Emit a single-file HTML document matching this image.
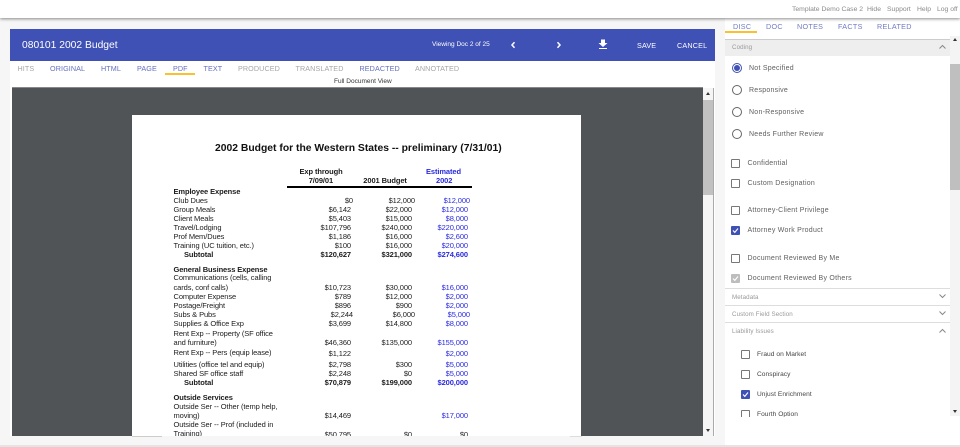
<!DOCTYPE html>
<html><head><meta charset="utf-8"><style>
html,body{margin:0;padding:0;width:960px;height:447px;overflow:hidden;background:#f6f6f6;font-family:"Liberation Sans",Arial,sans-serif}
body{filter:blur(.3px)}
.a{position:absolute}
.t{position:absolute;white-space:nowrap;line-height:10px;height:10px}
#top .t{font-size:6.8px;color:#8a8a8a;top:5px}
.tab{font-size:7.2px;letter-spacing:.1px;top:64px;color:#6470bd}
.off{color:#a6a6a6}
.rt{font-size:7.2px;letter-spacing:.3px;top:22px;color:#6f7bc4}
.lab{font-size:7px;letter-spacing:.25px;color:#5f5f5f}
.sec{font-size:6.2px;letter-spacing:.1px;color:#999}
.sub{font-size:6.6px;letter-spacing:.05px;color:#444}
.r{width:8px;height:8px;border:1px solid #666;border-radius:50%;position:absolute;left:732px;background:#fff}
.c{width:6.5px;height:6.5px;border:1.2px solid #777;border-radius:1px;position:absolute;background:#fff}
.on{background:#3f51b5;border-color:#3f51b5}
.on svg,.dis svg{position:absolute;left:0;top:0}
.dis{background:#bdbdbd;border-color:#bdbdbd}
.ln{position:absolute;left:725px;width:225px;height:1px;background:#ddd}
#doc .t{font-size:7.5px;letter-spacing:-.1px;color:#1c1c1c}
.b{font-weight:bold}
#doc .bl{color:#2a2ae0}
.c1{right:609px}.c2{right:548px}.c3{right:492px}
.c1x{right:607px}.c2x{right:545px}.c3x{right:490px}
</style></head><body>
<!-- top bar -->
<div id="top" class="a" style="left:0;top:0;width:960px;height:18px;background:#fff;box-shadow:0 1px 3px rgba(0,0,0,.45);z-index:3">
<span class="t" style="left:792px">Template Demo Case 2</span>
<span class="t" style="left:867px">Hide</span>
<span class="t" style="left:887px">Support</span>
<span class="t" style="left:917px">Help</span>
<span class="t" style="left:937px">Log off</span>
</div>
<!-- left card -->
<div class="a" style="left:10px;top:61px;width:705px;height:375px;background:#fff"></div>
<div class="a" style="left:10px;top:29px;width:705px;height:32px;background:#3f51b5"></div>
<span class="t" style="left:22px;top:41px;font-size:10.3px;color:#fff">080101 2002 Budget</span>
<span class="t" style="left:432px;top:40px;font-size:6.5px;color:#fff">Viewing Doc 2 of 25</span>
<svg class="a" style="left:509px;top:40px" width="8" height="10"><path d="M5.5 2.2 L3 5 L5.5 7.8" fill="none" stroke="#fff" stroke-width="1.5"/></svg>
<svg class="a" style="left:555px;top:40px" width="8" height="10"><path d="M2.5 2.2 L5 5 L2.5 7.8" fill="none" stroke="#fff" stroke-width="1.5"/></svg>
<svg class="a" style="left:598px;top:39px" width="10" height="11"><path d="M3 0.5H7V4H9.5L5 8L0.5 4H3Z M1 9H9V10H1Z" fill="#fff"/></svg>
<span class="t" style="left:637px;top:40.5px;font-size:7.2px;color:#fff;letter-spacing:.15px">SAVE</span>
<span class="t" style="left:677px;top:40.5px;font-size:7.2px;color:#fff;letter-spacing:.2px">CANCEL</span>
<!-- tabs -->
<span class="t tab off" style="left:17.5px">HITS</span>
<span class="t tab" style="left:50px">ORIGINAL</span>
<span class="t tab" style="left:101px">HTML</span>
<span class="t tab" style="left:137px">PAGE</span>
<span class="t tab" style="left:173px">PDF</span>
<span class="t tab" style="left:203.5px">TEXT</span>
<span class="t tab off" style="left:238px">PRODUCED</span>
<span class="t tab off" style="left:295.5px">TRANSLATED</span>
<span class="t tab" style="left:359.5px">REDACTED</span>
<span class="t tab off" style="left:415px">ANNOTATED</span>
<div class="a" style="left:165px;top:73px;width:30px;height:2px;background:#fbc02d"></div>
<span class="t" style="left:334px;top:77px;font-size:6.5px;color:#333">Full Document View</span>
<!-- viewer -->
<div class="a" style="left:12px;top:88px;width:691px;height:348px;background:#505457;border-top:0"></div>
<div class="a" style="left:12px;top:87px;width:691px;height:1px;background:#888"></div>
<div class="a" style="left:703px;top:88px;width:10px;height:348px;background:#f5f5f5;border-right:1px solid #aaa"></div>
<div class="a" style="left:703px;top:100px;width:10px;height:95px;background:#c1c1c1"></div>
<div class="a" style="left:705.5px;top:92px;border:2.5px solid transparent;border-top:0;border-bottom:3px solid #333"></div>
<div class="a" style="left:705.5px;top:429px;border:2.5px solid transparent;border-bottom:0;border-top:3px solid #333"></div>
<!-- doc page -->
<div id="doc" class="a" style="left:0;top:0;width:960px;height:436px;overflow:hidden">
<div class="a" style="left:132px;top:115px;width:449px;height:330px;background:#fff"></div>
<span class="t b" style="left:215px;top:143.5px;font-size:10.35px;letter-spacing:0;color:#111">2002 Budget for the Western States -- preliminary (7/31/01)</span>
<span class="t b" style="left:299.5px;top:166.5px">Exp through</span>
<span class="t b" style="left:308.7px;top:176px">7/09/01</span>
<span class="t b" style="left:363.3px;top:176px">2001 Budget</span>
<span class="t b bl" style="left:426px;top:166.5px">Estimated</span>
<span class="t b bl" style="left:436px;top:176px">2002</span>
<div class="a" style="left:287px;top:186px;width:185px;height:2px;background:#000"></div>

<span class="t b" style="left:173.5px;top:186.5px">Employee Expense</span>
<span class="t" style="left:173.5px;top:195.5px">Club Dues</span><span class="t c1x" style="top:195.5px">$0</span><span class="t c2x" style="top:195.5px">$12,000</span><span class="t c3x bl" style="top:195.5px">$12,000</span>
<span class="t" style="left:173.5px;top:205px">Group Meals</span><span class="t c1" style="top:205px">$6,142</span><span class="t c2" style="top:205px">$22,000</span><span class="t c3 bl" style="top:205px">$12,000</span>
<span class="t" style="left:173.5px;top:214px">Client Meals</span><span class="t c1" style="top:214px">$5,403</span><span class="t c2" style="top:214px">$15,000</span><span class="t c3 bl" style="top:214px">$8,000</span>
<span class="t" style="left:173.5px;top:223px">Travel/Lodging</span><span class="t c1" style="top:223px">$107,796</span><span class="t c2" style="top:223px">$240,000</span><span class="t c3 bl" style="top:223px">$220,000</span>
<span class="t" style="left:173.5px;top:232px">Prof Mem/Dues</span><span class="t c1" style="top:232px">$1,186</span><span class="t c2" style="top:232px">$16,000</span><span class="t c3 bl" style="top:232px">$2,600</span>
<span class="t" style="left:173.5px;top:241px">Training (UC tuition, etc.)</span><span class="t c1" style="top:241px">$100</span><span class="t c2" style="top:241px">$16,000</span><span class="t c3 bl" style="top:241px">$20,000</span>
<span class="t b" style="left:184px;top:250px">Subtotal</span><span class="t b c1" style="top:250px">$120,627</span><span class="t b c2" style="top:250px">$321,000</span><span class="t b c3 bl" style="top:250px">$274,600</span>

<span class="t b" style="left:173.5px;top:264.5px">General Business Expense</span>
<span class="t" style="left:173.5px;top:273px">Communications (cells, calling</span>
<span class="t" style="left:173.5px;top:282.5px">cards, conf calls)</span><span class="t c1" style="top:283px">$10,723</span><span class="t c2" style="top:283px">$30,000</span><span class="t c3 bl" style="top:283px">$16,000</span>
<span class="t" style="left:173.5px;top:291.5px">Computer Expense</span><span class="t c1" style="top:292px">$789</span><span class="t c2" style="top:292px">$12,000</span><span class="t c3 bl" style="top:292px">$2,000</span>
<span class="t" style="left:173.5px;top:300.5px">Postage/Freight</span><span class="t c1" style="top:301px">$896</span><span class="t c2" style="top:301px">$900</span><span class="t c3 bl" style="top:301px">$2,000</span>
<span class="t" style="left:173.5px;top:310px">Subs &amp; Pubs</span><span class="t c1x" style="top:310px">$2,244</span><span class="t c2x" style="top:310px">$6,000</span><span class="t c3x bl" style="top:310px">$5,000</span>
<span class="t" style="left:173.5px;top:319px">Supplies &amp; Office Exp</span><span class="t c1" style="top:319px">$3,699</span><span class="t c2" style="top:319px">$14,800</span><span class="t c3 bl" style="top:319px">$8,000</span>
<span class="t" style="left:173.5px;top:329px">Rent Exp -- Property (SF office</span>
<span class="t" style="left:173.5px;top:338px">and furniture)</span><span class="t c1" style="top:338px">$46,360</span><span class="t c2" style="top:338px">$135,000</span><span class="t c3 bl" style="top:338px">$155,000</span>
<span class="t" style="left:173.5px;top:348px">Rent Exp -- Pers (equip lease)</span><span class="t c1" style="top:348.5px">$1,122</span><span class="t c3 bl" style="top:348.5px">$2,000</span>
<span class="t" style="left:173.5px;top:359.5px">Utilities (office tel and equip)</span><span class="t c1" style="top:359.5px">$2,798</span><span class="t c2" style="top:359.5px">$300</span><span class="t c3 bl" style="top:359.5px">$5,000</span>
<span class="t" style="left:173.5px;top:368.5px">Shared SF office staff</span><span class="t c1" style="top:368.5px">$2,248</span><span class="t c2" style="top:368.5px">$0</span><span class="t c3 bl" style="top:368.5px">$5,000</span>
<span class="t b" style="left:184px;top:377.5px">Subtotal</span><span class="t b c1" style="top:377.5px">$70,879</span><span class="t b c2" style="top:377.5px">$199,000</span><span class="t b c3 bl" style="top:377.5px">$200,000</span>

<span class="t b" style="left:173.5px;top:392.5px">Outside Services</span>
<span class="t" style="left:173.5px;top:401.5px">Outside Ser -- Other (temp help,</span>
<span class="t" style="left:173.5px;top:410.5px">moving)</span><span class="t c1" style="top:410.5px">$14,469</span><span class="t c3 bl" style="top:410.5px">$17,000</span>
<span class="t" style="left:173.5px;top:419.5px">Outside Ser -- Prof (included in</span>
<span class="t" style="left:173.5px;top:429px">Training)</span><span class="t c1" style="top:429.5px">$50,795</span><span class="t c2" style="top:429.5px">$0</span><span class="t c3" style="top:429.5px">$0</span>
</div>
<div class="a" style="left:132px;top:436px;width:30px;height:1px;background:#ccc"></div>
<div class="a" style="left:570px;top:436px;width:12px;height:1px;background:#ddd"></div>
<!-- right panel -->
<div class="a" style="left:725px;top:18px;width:235px;height:428px;background:#fff"></div>
<div class="a" style="left:0;top:445px;width:960px;height:2px;background:#e4e4e4"></div>
<span class="t rt" style="left:733px">DISC</span>
<span class="t rt" style="left:766px">DOC</span>
<span class="t rt" style="left:797px">NOTES</span>
<span class="t rt" style="left:838px">FACTS</span>
<span class="t rt" style="left:877px">RELATED</span>
<div class="a" style="left:725px;top:31px;width:32px;height:2px;background:#fbc02d"></div>
<div class="a" style="left:725px;top:39px;width:225px;height:1px;background:#ccc"></div>
<div class="a" style="left:725px;top:40px;width:225px;height:16px;background:#eee"></div>
<span class="t sec" style="left:732px;top:43px">Coding</span>
<svg class="a" style="left:938px;top:44px" width="9" height="6"><path d="M1.5 4.5L4.5 1.5L7.5 4.5" fill="none" stroke="#888" stroke-width="1"/></svg>
<div class="a" style="left:950px;top:36px;width:10px;height:380px;background:#f4f4f4"></div>
<div class="a" style="left:950px;top:64px;width:10px;height:126px;background:#bfbfbf"></div>
<div class="a" style="left:952.5px;top:38px;border:2.5px solid transparent;border-top:0;border-bottom:3px solid #333"></div>
<div class="a" style="left:952.5px;top:410px;border:2.5px solid transparent;border-bottom:0;border-top:3px solid #333"></div>

<div class="r" style="top:63px;border-color:#3f51b5"></div>
<div class="a" style="left:734px;top:65px;width:6px;height:6px;border-radius:50%;background:#3f51b5"></div>
<span class="t lab" style="left:749px;top:63.5px">Not Specified</span>
<div class="r" style="top:85px"></div><span class="t lab" style="left:749px;top:85.5px">Responsive</span>
<div class="r" style="top:107px"></div><span class="t lab" style="left:749px;top:107.5px">Non-Responsive</span>
<div class="r" style="top:129px"></div><span class="t lab" style="left:749px;top:129.5px">Needs Further Review</span>

<div class="c" style="left:731px;top:159px"></div><span class="t lab" style="left:747.5px;top:158.5px">Confidential</span>
<div class="c" style="left:731px;top:179px"></div><span class="t lab" style="left:747.5px;top:178.5px">Custom Designation</span>
<div class="c" style="left:731px;top:206px"></div><span class="t lab" style="left:747.5px;top:206px">Attorney-Client Privilege</span>
<div class="c on" style="left:731px;top:226px"><svg width="7" height="7"><path d="M1 3.5L2.8 5.4L6 1.5" fill="none" stroke="#fff" stroke-width="1.1"/></svg></div><span class="t lab" style="left:747.5px;top:226px">Attorney Work Product</span>
<div class="c" style="left:731px;top:254px"></div><span class="t lab" style="left:747.5px;top:253.5px">Document Reviewed By Me</span>
<div class="c dis" style="left:731px;top:274px"><svg width="7" height="7"><path d="M1 3.5L2.8 5.4L6 1.5" fill="none" stroke="#fff" stroke-width="1.1"/></svg></div><span class="t lab" style="left:747.5px;top:273.5px">Document Reviewed By Others</span>

<div class="ln" style="top:288px"></div>
<span class="t sec" style="left:732px;top:292.5px">Metadata</span>
<svg class="a" style="left:938px;top:293px" width="9" height="6"><path d="M1.5 1.5L4.5 4.5L7.5 1.5" fill="none" stroke="#888" stroke-width="1"/></svg>
<div class="ln" style="top:305px"></div>
<span class="t sec" style="left:732px;top:309.5px">Custom Field Section</span>
<svg class="a" style="left:938px;top:310px" width="9" height="6"><path d="M1.5 1.5L4.5 4.5L7.5 1.5" fill="none" stroke="#888" stroke-width="1"/></svg>
<div class="ln" style="top:322px"></div>
<span class="t sec" style="left:732px;top:326.5px">Liability Issues</span>
<svg class="a" style="left:938px;top:328px" width="9" height="6"><path d="M1.5 4.5L4.5 1.5L7.5 4.5" fill="none" stroke="#888" stroke-width="1"/></svg>

<div class="c" style="left:741px;top:350px"></div><span class="t sub" style="left:757px;top:349.5px">Fraud on Market</span>
<div class="c" style="left:741px;top:370px"></div><span class="t sub" style="left:757px;top:369.5px">Conspiracy</span>
<div class="c on" style="left:741px;top:390px"><svg width="7" height="7"><path d="M1 3.5L2.8 5.4L6 1.5" fill="none" stroke="#fff" stroke-width="1.1"/></svg></div><span class="t sub" style="left:757px;top:389.5px">Unjust Enrichment</span>
<div class="c" style="left:741px;top:410px"></div><span class="t sub" style="left:757px;top:409.5px">Fourth Option</span>
<div class="a" style="left:725px;top:417px;width:225px;height:28px;background:#fff;z-index:1"></div>
</body></html>
